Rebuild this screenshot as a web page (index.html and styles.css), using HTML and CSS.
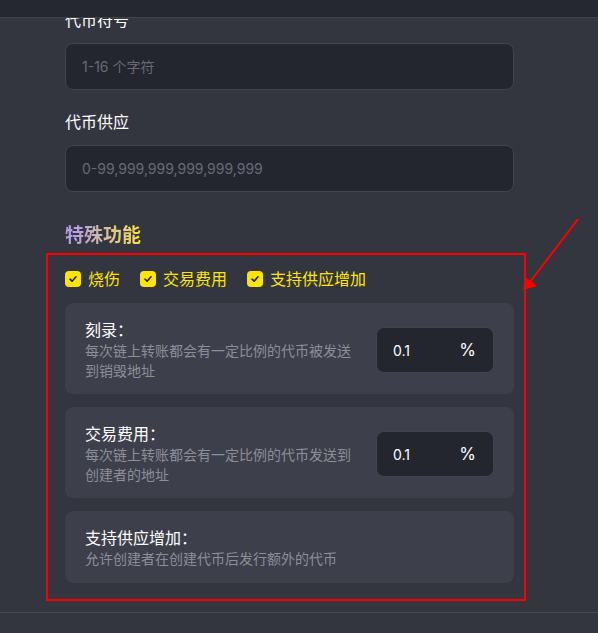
FILE: index.html
```html
<!DOCTYPE html>
<html lang="zh-CN">
<head>
    <meta charset="UTF-8">
    <meta name="viewport" content="width=device-width, initial-scale=1.0">
    <title>创建代币</title>
    <link rel="stylesheet" href="styles.css">
</head>
<body>
    <div class="top_bar"></div>

    <div class="form_con">
        <div class="field_label">代币符号</div>
        <input type="text" class="field_input" placeholder="1-16 个字符">

        <div class="field_label second">代币供应</div>
        <input type="text" class="field_input" placeholder="0-99,999,999,999,999,999">

        <h2 class="special_title">特殊功能</h2>

        <div class="special_box">
            <div class="check_row">
                <label class="check_item">
                    <span class="check_mark"><svg width="10" height="10" viewBox="0 0 10 10"><path d="M2 5.2 L4.1 7.2 L8 2.8" fill="none" stroke="#1e1f24" stroke-width="1.6" stroke-linecap="round" stroke-linejoin="round"/></svg></span>
                    烧伤
                </label>
                <label class="check_item">
                    <span class="check_mark"><svg width="10" height="10" viewBox="0 0 10 10"><path d="M2 5.2 L4.1 7.2 L8 2.8" fill="none" stroke="#1e1f24" stroke-width="1.6" stroke-linecap="round" stroke-linejoin="round"/></svg></span>
                    交易费用
                </label>
                <label class="check_item">
                    <span class="check_mark"><svg width="10" height="10" viewBox="0 0 10 10"><path d="M2 5.2 L4.1 7.2 L8 2.8" fill="none" stroke="#1e1f24" stroke-width="1.6" stroke-linecap="round" stroke-linejoin="round"/></svg></span>
                    支持供应增加
                </label>
            </div>

            <div class="opt_card">
                <div class="opt_text">
                    <div class="opt_title">刻录：</div>
                    <div class="opt_desc">每次链上转账都会有一定比例的代币被发送到销毁地址</div>
                </div>
                <div class="rate_box"><span>0.1</span><span class="rate_unit">%</span></div>
            </div>

            <div class="opt_card">
                <div class="opt_text">
                    <div class="opt_title">交易费用：</div>
                    <div class="opt_desc">每次链上转账都会有一定比例的代币发送到创建者的地址</div>
                </div>
                <div class="rate_box"><span>0.1</span><span class="rate_unit">%</span></div>
            </div>

            <div class="opt_card no_rate">
                <div class="opt_text">
                    <div class="opt_title">支持供应增加：</div>
                    <div class="opt_desc">允许创建者在创建代币后发行额外的代币</div>
                </div>
            </div>

            <!-- 标注框 -->
            <div class="mark_frame"></div>
        </div>
    </div>

    <div class="bottom_bar"></div>

    <!-- 标注箭头 -->
    <svg class="mark_arrow" width="598" height="633" viewBox="0 0 598 633">
        <line x1="578" y1="219" x2="530" y2="282" stroke="#ff0000" stroke-width="2"/>
        <polygon points="523,290 525,277 537,286" fill="#ff0000"/>
    </svg>
</body>
</html>
```

FILE: styles.css
```css
        body{
            margin:0;
            background:#33353f;
            font-family:Inter, "Noto Sans CJK SC", sans-serif;
            color:#fff;
            height:633px;
            overflow:hidden;
            position:relative;
        }
        .top_bar{
            position:absolute;
            top:0;
            left:0;
            right:0;
            height:17px;
            background:#262830;
            border-bottom:1px solid #41444e;
            z-index:2;
        }
        .form_con{
            width:449px;
            margin-left:65px;
            padding-top:8px;
        }
        .field_label{
            font-size:16px;
            line-height:24px;
            margin-bottom:11px;
        }
        .field_label.second{
            margin-top:20px;
        }
        .field_input{
            display:block;
            width:100%;
            height:47px;
            box-sizing:border-box;
            background:#24262e;
            border:1px solid #41444e;
            border-radius:8px;
            padding:0 16px;
            outline:none;
            color:#fff;
            font-family:Inter, "Noto Sans CJK SC", sans-serif;
            font-size:14px;
        }
        .field_input::placeholder{
            color:#676a74;
        }
        .special_title{
            display:inline-block;
            margin:30px 0 0;
            font-size:19px;
            line-height:28px;
            font-weight:700;
            background:linear-gradient(90deg, #b39ce8 10%, #f8e245);
            -webkit-background-clip:text;
            background-clip:text;
            color:transparent;
        }
        .special_box{
            position:relative;
            margin-top:17px;
        }
        .check_row{
            display:flex;
            gap:20px;
            height:24px;
            align-items:center;
            margin-bottom:12px;
        }
        .check_item{
            display:flex;
            align-items:center;
            gap:7px;
            font-size:16px;
            line-height:24px;
            color:#ffe600;
        }
        .check_mark{
            width:16px;
            height:16px;
            border-radius:4px;
            background:#ffe600;
            display:flex;
            align-items:center;
            justify-content:center;
        }
        .opt_card{
            display:flex;
            align-items:center;
            justify-content:space-between;
            background:#3d3f4a;
            border-radius:8px;
            padding:16px 20px 13px;
            margin-bottom:13px;
        }
        .opt_card.no_rate{
            padding-bottom:14px;
            margin-bottom:0;
        }
        .opt_title{
            font-size:16px;
            line-height:22px;
            color:#fff;
        }
        .opt_desc{
            font-size:14px;
            line-height:20px;
            color:#8c8f99;
            max-width:270px;
        }
        .rate_box{
            width:118px;
            height:46px;
            box-sizing:border-box;
            background:#24262e;
            border:1px solid #41444e;
            border-radius:8px;
            padding:0 17px 0 16px;
            display:flex;
            align-items:center;
            justify-content:space-between;
            font-size:14px;
        }
        .rate_unit{
            font-size:17px;
        }
        .mark_frame{
            position:absolute;
            top:-14px;
            left:-19px;
            right:-12px;
            bottom:-18px;
            border:2px solid #ff0000;
            pointer-events:none;
        }
        .bottom_bar{
            margin-top:29px;
            border-top:1px solid #464952;
            height:40px;
        }
        .mark_arrow{
            position:absolute;
            top:0;
            left:0;
            pointer-events:none;
        }
```
